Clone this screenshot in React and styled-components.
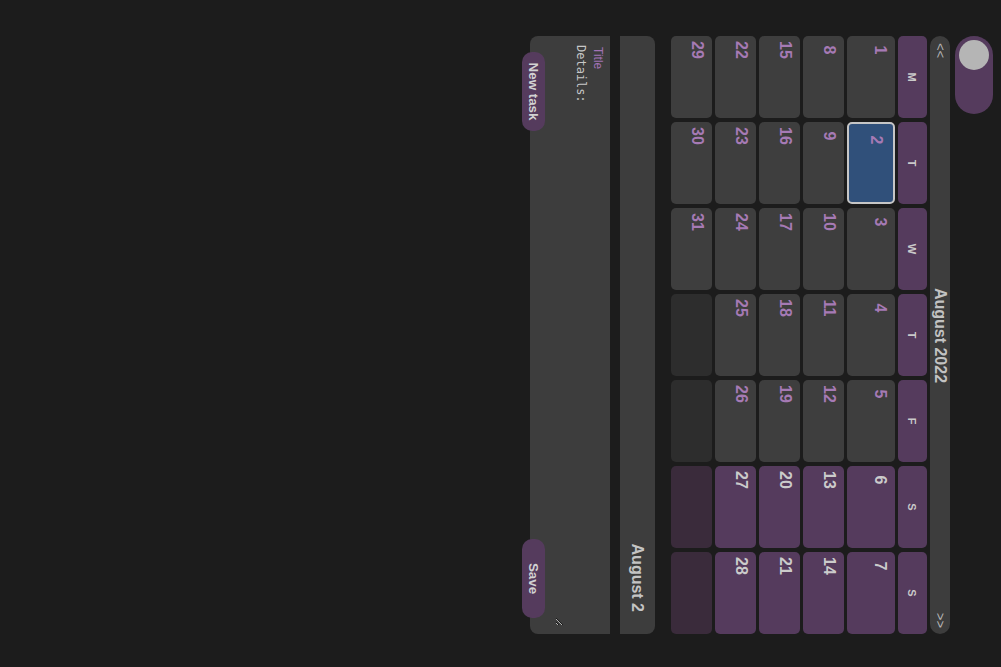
import React, { useState } from 'react';
import styled, { createGlobalStyle } from 'styled-components';

const GlobalStyle = createGlobalStyle`
  html {
    height: 100%;
    overflow: hidden;
    background: #1c1c1c;
  }
  body {
    margin: 0;
    padding: 0;
    min-height: 100%;
    background: #1c1c1c;
    font-family: "Liberation Sans", Arial, sans-serif;
  }
`;

// the whole planner is drawn turned a quarter clockwise
const Stage = styled.div`
  width: 667px;
  min-height: 100vh;
  box-sizing: border-box;
  padding: 8px 0 0 36px;
  transform-origin: 0 0;
  transform: translateX(100vw) rotate(90deg);
`;

const Column = styled.div`
  width: 598px;
`;

const Toggle = styled.div`
  width: 78px;
  height: 38px;
  box-sizing: border-box;
  padding: 4px;
  border-radius: 19px;
  background: #553b5d;
  margin-bottom: 5px;
  display: flex;
  justify-content: ${props => props.$on ? 'flex-end' : 'flex-start'};
  cursor: pointer;
`;

const Knob = styled.span`
  width: 30px;
  height: 30px;
  border-radius: 50%;
  background: #b5b5b5;
`;

const MonthBar = styled.div`
  height: 20px;
  border-radius: 10px;
  background: #3d3d3d;
  display: flex;
  align-items: center;
  justify-content: space-between;
  padding: 0 6px 0 7px;
  margin-bottom: 3px;
`;

const Arrow = styled.span`
  font-size: 13px;
  line-height: 20px;
  color: #b9b9b9;
  cursor: pointer;
`;

const MonthTitle = styled.span`
  font-size: 16px;
  font-weight: 700;
  line-height: 20px;
  color: #c2c2c2;
`;

const Grid = styled.div`
  display: grid;
  grid-template-columns: repeat(7, 82px);
  gap: 3px 4px;
`;

const WeekDay = styled.div`
  height: 29px;
  border-radius: 5px;
  background: #553b5d;
  display: flex;
  align-items: center;
  justify-content: center;
  font-size: 11px;
  font-weight: 700;
  color: #cacaca;
`;

const cellBackgrounds = {
  day: '#3e3e3e',
  weekend: '#553b5d',
  empty: '#2d2d2d',
  emptyWeekend: '#3a2b3b',
  selected: '#30507a'
};

const DayCell = styled.div`
  min-height: 41px;
  box-sizing: border-box;
  border-radius: 5px;
  padding-top: 6px;
  background: ${props => cellBackgrounds[props.$tone]};
  cursor: ${props => props.$tone.startsWith('empty') ? 'default' : 'pointer'};

  ${props => props.$tone === 'selected' && `
    height: 48px;
    border: 2px solid #c6c6c6;
    padding: 8px 0 0 2px;
  `}
`;

const DayNumber = styled.span`
  display: block;
  width: 28px;
  text-align: center;
  font-size: 16px;
  font-weight: 700;
  line-height: 18px;
  color: ${props => props.$weekend ? '#cbcbcb' : '#a67ab5'};
`;

const DayHeader = styled.div`
  margin-top: 16px;
  height: 35px;
  border-radius: 8px 8px 0 0;
  background: #3d3d3d;
  text-align: right;
  padding-right: 22px;
  font-size: 16px;
  font-weight: 700;
  line-height: 35px;
  color: #c4c4c4;
`;

const TaskPanel = styled.div`
  margin-top: 10px;
  height: 80px;
  box-sizing: border-box;
  padding: 4px 8px;
  border-radius: 0 0 8px 8px;
  background: #3d3d3d;
`;

const TitleInput = styled.input`
  display: block;
  width: 100%;
  height: 16px;
  box-sizing: border-box;
  padding: 0 3px;
  border: 0;
  outline: 0;
  background: transparent;
  font-family: "Liberation Sans", Arial, sans-serif;
  font-size: 12px;
  color: #d0d0d0;

  &::placeholder {
    color: #a273b6;
  }
`;

const DetailsArea = styled.textarea`
  display: block;
  width: 100%;
  height: 34px;
  box-sizing: border-box;
  margin-top: 1px;
  padding: 1px;
  border: 0;
  outline: 0;
  background: transparent;
  font-family: "DejaVu Sans Mono", "Liberation Mono", monospace;
  font-size: 12px;
  color: #c8c8c8;

  &::placeholder {
    color: #c8c8c8;
  }
`;

const ButtonRow = styled.div`
  position: relative;
  display: flex;
  justify-content: space-between;
  padding: 0 16px;
  margin-top: -15px;
`;

const ActionButton = styled.button`
  width: 79px;
  height: 23px;
  border: 0;
  border-radius: 10px;
  background: #553b5d;
  color: #d2d2d2;
  font-family: "Liberation Sans", Arial, sans-serif;
  font-size: 13.33px;
  font-weight: 700;
  cursor: pointer;
`;

const weekDays = ['M', 'T', 'W', 'T', 'F', 'S', 'S'];

// August 2022 starts on a Monday
const cells = Array.from({ length: 35 }, (_, i) => (i < 31 ? i + 1 : null));

function App() {
  const [dark, setDark] = useState(false);
  const [selected, setSelected] = useState(2);

  const toneFor = (day, index) => {
    const weekend = index % 7 >= 5;
    if (day === null) return weekend ? 'emptyWeekend' : 'empty';
    if (day === selected) return 'selected';
    return weekend ? 'weekend' : 'day';
  };

  return (
    <>
      <GlobalStyle />
      <Stage>
        <Column>
          <Toggle $on={dark} onClick={() => setDark(prev => !prev)}>
            <Knob />
          </Toggle>

          <MonthBar>
            <Arrow>&lt;&lt;</Arrow>
            <MonthTitle>August 2022</MonthTitle>
            <Arrow>&gt;&gt;</Arrow>
          </MonthBar>

          <Grid>
            {weekDays.map((name, i) => (
              <WeekDay key={`wd-${i}`}>{name}</WeekDay>
            ))}
            {cells.map((day, i) => (
              <DayCell
                key={`d-${i}`}
                $tone={toneFor(day, i)}
                onClick={() => day && setSelected(day)}
              >
                {day && <DayNumber $weekend={i % 7 >= 5}>{day}</DayNumber>}
              </DayCell>
            ))}
          </Grid>

          <DayHeader>August {selected}</DayHeader>

          <TaskPanel>
            <TitleInput placeholder="Title" />
            <DetailsArea placeholder="Details:" />
          </TaskPanel>
          <ButtonRow>
            <ActionButton>New task</ActionButton>
            <ActionButton>Save</ActionButton>
          </ButtonRow>
        </Column>
      </Stage>
    </>
  );
}

export default App;
